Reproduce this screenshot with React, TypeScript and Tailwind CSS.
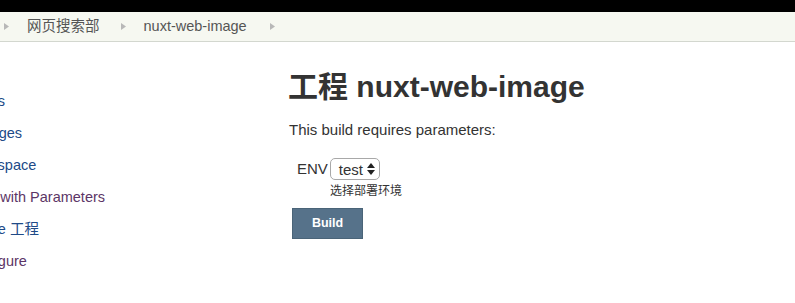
import React from "react";

const sideLinks = [
  { label: "Status", visited: false },
  { label: "Changes", visited: false },
  { label: "Workspace", visited: false },
  { label: "Build with Parameters", visited: true },
  { label: "Delete 工程", visited: false },
  { label: "Configure", visited: true },
];

function Arrow() {
  return (
    <svg width="5" height="7" viewBox="0 0 5 7" className="shrink-0">
      <path d="M0 0 L5 3.5 L0 7 Z" fill="#b8b8b8" />
    </svg>
  );
}

export default function App() {
  return (
    <div
      className="w-[795px] h-[303px] overflow-hidden bg-white text-[#333]"
      style={{ fontFamily: '"Liberation Sans", Arial, "Noto Sans CJK SC", sans-serif' }}
    >
      {/* top header, mostly scrolled off */}
      <div className="h-[12px] bg-black overflow-hidden">
        <div className="-mt-[15px] pl-[2px] text-[15px] font-bold leading-[16px] text-white">
          网页搜索部 Jenkins
        </div>
      </div>

      {/* breadcrumbs */}
      <div className="h-[30px] bg-[#f6f8f1] border-b border-[#d3d7cf] flex items-center pl-[4px] text-[14.5px] text-[#555]">
        <Arrow />
        <span className="ml-[18px]">网页搜索部</span>
        <span className="ml-[21px]"><Arrow /></span>
        <span className="ml-[18px]">nuxt-web-image</span>
        <span className="ml-[23px]"><Arrow /></span>
      </div>

      <div className="flex">
        <aside className="w-[289px] shrink-0 overflow-hidden pt-[43px]">
          <ul className="-ml-[36px] text-[14.5px]">
            {sideLinks.map((l) => (
              <li
                key={l.label}
                className={`h-[32px] leading-[32px] whitespace-nowrap ${
                  l.visited ? "text-[#5c3566]" : "text-[#204a87]"
                }`}
              >
                {l.label}
              </li>
            ))}
          </ul>
        </aside>

        <main className="flex-1 pt-[27px]">
          <h1 className="-ml-[1px] text-[30px] leading-[36px] font-bold text-[#333]">工程 nuxt-web-image</h1>
          <p className="mt-[15px] text-[15px] leading-[20px]">This build requires parameters:</p>

          <div className="mt-[18px] pl-[8px] flex items-center text-[15px]">
            <span>ENV</span>
            <div className="ml-[2px] h-[22px] w-[50px] rounded-[5px] border border-[#a8a8a8] bg-white flex items-center pl-[8px] gap-[4px]">
              <span className="leading-none">test</span>
              <svg width="8" height="12" viewBox="0 0 8 12">
                <path d="M4 0 L8 5 L0 5 Z" fill="#222" />
                <path d="M0 7 L8 7 L4 12 Z" fill="#222" />
              </svg>
            </div>
          </div>
          <div className="mt-[2px] pl-[41px] text-[12px] leading-[16px] text-[#333]">选择部署环境</div>

          <button className="mt-[9px] ml-[3px] h-[31px] w-[71px] bg-[#56728a] border border-[#4a6478] text-white text-[12.5px] font-bold">
            Build
          </button>
        </main>
      </div>
    </div>
  );
}
